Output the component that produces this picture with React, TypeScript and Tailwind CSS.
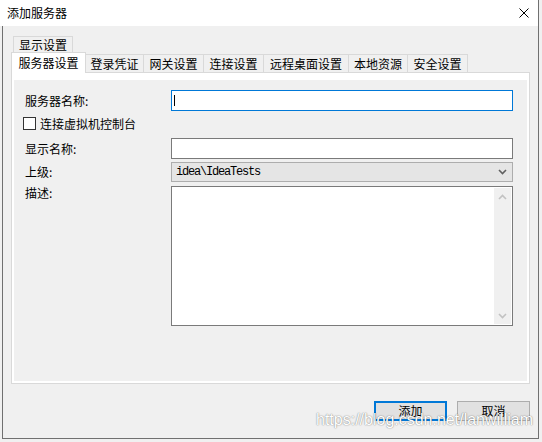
import React from 'react'

const tabs = [
  { label: '登录凭证', w: 'w-[58px]' },
  { label: '网关设置', w: 'w-[60px]' },
  { label: '连接设置', w: 'w-[60px]' },
  { label: '远程桌面设置', w: 'w-[85px]' },
  { label: '本地资源', w: 'w-[59px]' },
  { label: '安全设置', w: 'w-[60px]' },
]

function Chevron({ up, className }: { up?: boolean; className?: string }) {
  return (
    <svg width="9" height="6" viewBox="0 0 9 6" className={className}>
      <path
        d={up ? 'M1 5 L4.5 1.5 L8 5' : 'M1 1 L4.5 4.5 L8 1'}
        fill="none"
        stroke="currentColor"
        strokeWidth="1.6"
      />
    </svg>
  )
}

function FormRow({
  label,
  children,
  className = '',
}: {
  label: string
  children: React.ReactNode
  className?: string
}) {
  return (
    <div className={`flex h-[21px] items-center ${className}`}>
      <div className="w-[146px] shrink-0">{label}</div>
      {children}
    </div>
  )
}

export default function App() {
  return (
    <div className="relative h-[442px] w-[542px] overflow-hidden bg-[#f0f0f0] font-['Noto_Sans_CJK_SC',sans-serif] text-[12px] leading-none text-black">
      <div className="flex h-[439px] w-[539px] flex-col border-r border-[#707070]">
        {/* title bar */}
        <div className="flex h-[26px] shrink-0 items-center justify-between bg-white pb-[1px] pl-[7px] pr-[9px]">
          <span>添加服务器</span>
          <svg width="10" height="10" viewBox="0 0 10 10">
            <path d="M0.5 0.5 L9.5 9.5 M9.5 0.5 L0.5 9.5" stroke="#000" strokeWidth="1" />
          </svg>
        </div>

        <div className="ml-[2px] flex flex-1 flex-col border-b border-l border-[#707070] pl-[8px] pr-[8px] pt-[10px]">
          {/* tabs row 1 */}
          <div className="flex h-[18px]">
            <div className="ml-[2px] flex w-[60px] items-center justify-center border-l border-r border-t border-[#d9d9d9] pb-[1px]">
              显示设置
            </div>
          </div>
          {/* tabs row 2 */}
          <div className="flex h-[18px] items-start">
            <div className="relative z-10 -mt-[2px] flex h-[21px] w-[75px] items-center justify-center border-l border-r border-t border-[#d9d9d9] bg-white pb-[1px]">
              服务器设置
            </div>
            {tabs.map((t) => (
              <div
                key={t.label}
                className={`flex h-[18px] ${t.w} items-center justify-center border-r border-t border-[#d9d9d9] bg-[#f0f0f0]`}
              >
                {t.label}
              </div>
            ))}
          </div>

          {/* tab panel */}
          <div className="flex h-[312px] shrink-0 border border-[#d9d9d9] bg-white px-[2px] pb-[2px] pt-[7px]">
            <div className="flex-1 bg-[#f0f0f0] pl-[11px] pr-[14px] pt-[10px]">
              <FormRow label="服务器名称:">
                <div className="flex h-full flex-1 items-center border border-[#0078d7] bg-white pl-[2px]">
                  <span className="h-[11px] w-px bg-black" />
                </div>
              </FormRow>

              <div className="mt-[6px] flex h-[13px] items-center">
                <span className="-ml-[2px] h-[13px] w-[13px] shrink-0 border border-[#333333] bg-white" />
                <span className="ml-[4px]">连接虚拟机控制台</span>
              </div>

              <FormRow label="显示名称:" className="mt-[8px]">
                <div className="h-full flex-1 border border-[#7a7a7a] bg-white" />
              </FormRow>

              <FormRow label="上级:" className="mt-[3px] !h-[20px]">
                <div className="flex h-full flex-1 items-center justify-between border border-[#adadad] bg-[#e5e5e5] pl-[4px] pr-[5px]">
                  <span className="font-['Liberation_Mono',monospace] text-[12px] tracking-[-1.2px]">
                    idea\IdeaTests
                  </span>
                  <Chevron className="text-[#606060]" />
                </div>
              </FormRow>

              <div className="mt-[4px] flex h-[140px] items-start">
                <div className="w-[146px] shrink-0 pt-[1px]">描述:</div>
                <div className="flex h-full flex-1 justify-end border border-[#7a7a7a] bg-white p-[1px]">
                  <div className="flex w-[17px] flex-col justify-between bg-[#f0f0f0] text-[#c2c2c2]">
                    <div className="flex h-[17px] items-center justify-center">
                      <Chevron up />
                    </div>
                    <div className="flex h-[17px] items-center justify-center">
                      <Chevron />
                    </div>
                  </div>
                </div>
              </div>
            </div>
          </div>

          {/* buttons */}
          <div className="mt-[17px] flex justify-end gap-[10px]">
            <button className="flex h-[20px] w-[73px] items-center justify-center border-2 border-[#0078d7] bg-[#e1e1e1]">
              添加
            </button>
            <button className="flex h-[20px] w-[73px] items-center justify-center border border-[#adadad] bg-[#e1e1e1]">
              取消
            </button>
          </div>
        </div>
      </div>

      {/* watermark */}
      <div className="pointer-events-none absolute left-[316px] top-[412px] font-['Liberation_Sans',sans-serif] text-[16px] leading-none text-white [text-shadow:0_0_1px_rgba(0,0,0,0.45),0_0_2px_rgba(0,0,0,0.25)]">
        https://blog.csdn.net/lanwilliam
      </div>
    </div>
  )
}
